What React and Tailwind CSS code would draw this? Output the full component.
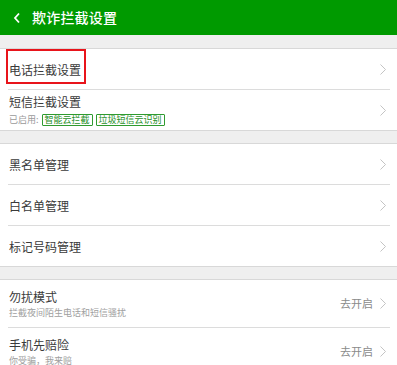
import React from "react";

const font = { fontFamily: '"Noto Sans CJK SC", "Noto Sans", sans-serif' };

function Chevron() {
  return (
    <svg width="8" height="13" viewBox="0 0 8 13" className="shrink-0">
      <path d="M1.5 1.5 L6.5 6.5 L1.5 11.5" fill="none" stroke="#c4c4c4" strokeWidth="1" />
    </svg>
  );
}

function Row({ title, sub, action, last, h = "h-[40px]", children }) {
  return (
    <div className="relative">
      <div className={`flex items-center pl-[9px] pr-[10px] ${h}`}>
        <div className="flex-1 flex flex-col justify-center">
          <p className="text-[12px] leading-[15px] text-[#3a3a3a]">{title}</p>
          {sub && <p className="text-[9px] leading-[12px] mt-[3px] text-[#a0a0a0]">{sub}</p>}
          {children}
        </div>
        {action && <span className="text-[11px] text-[#8a8a8a] mr-[6px]">{action}</span>}
        <Chevron />
      </div>
      {!last && <div className="ml-[8px] mr-[7px] h-px bg-[#dcdcdc]" />}
    </div>
  );
}

function Group({ children }) {
  return <div className="bg-white border-y border-[#d8d8d8]">{children}</div>;
}

function Tag({ children }) {
  return (
    <span className="border border-[#2f9b2f] text-[#1f8f1f] text-[9px] leading-[10px] px-[2px] rounded-[1px]">
      {children}
    </span>
  );
}

export default function App() {
  return (
    <div className="w-[397px] h-[365px] overflow-hidden bg-[#efefef] relative" style={font}>
      {/* Barra superior */}
      <div className="h-[35px] bg-[#009a00] flex items-center pl-[13px] text-white">
        <svg width="8" height="12" viewBox="0 0 8 12">
          <path d="M6 1.5 L2 6 L6 10.5" fill="none" stroke="#fff" strokeWidth="1.8" />
        </svg>
        <span className="ml-[11px] text-[14px] font-medium tracking-[0.2px]">欺诈拦截设置</span>
      </div>

      <div className="h-[13px]" />
      <Group>
        <Row title="电话拦截设置" />
        <Row title="短信拦截设置" last>
          <div className="flex items-center gap-[3px] mt-[4px] text-[9px] text-[#9a9a9a]">
            <span>已启用:</span>
            <Tag>智能云拦截</Tag>
            <Tag>垃圾短信云识别</Tag>
          </div>
        </Row>
      </Group>

      <div className="h-[12px]" />
      <Group>
        <Row title="黑名单管理" />
        <Row title="白名单管理" />
        <Row title="标记号码管理" last />
      </Group>

      <div className="h-[12px]" />
      <Group>
        <Row title="勿扰模式" sub="拦截夜间陌生电话和短信骚扰" action="去开启" h="h-[47px]" />
        <Row title="手机先赔险" sub="你受骗，我来赔" action="去开启" h="h-[47px]" last />
      </Group>

      {/* Marca roja */}
      <div className="absolute left-[6px] top-[49px] w-[80px] h-[35px] border-2 border-[#e8141b]" />
    </div>
  );
}
